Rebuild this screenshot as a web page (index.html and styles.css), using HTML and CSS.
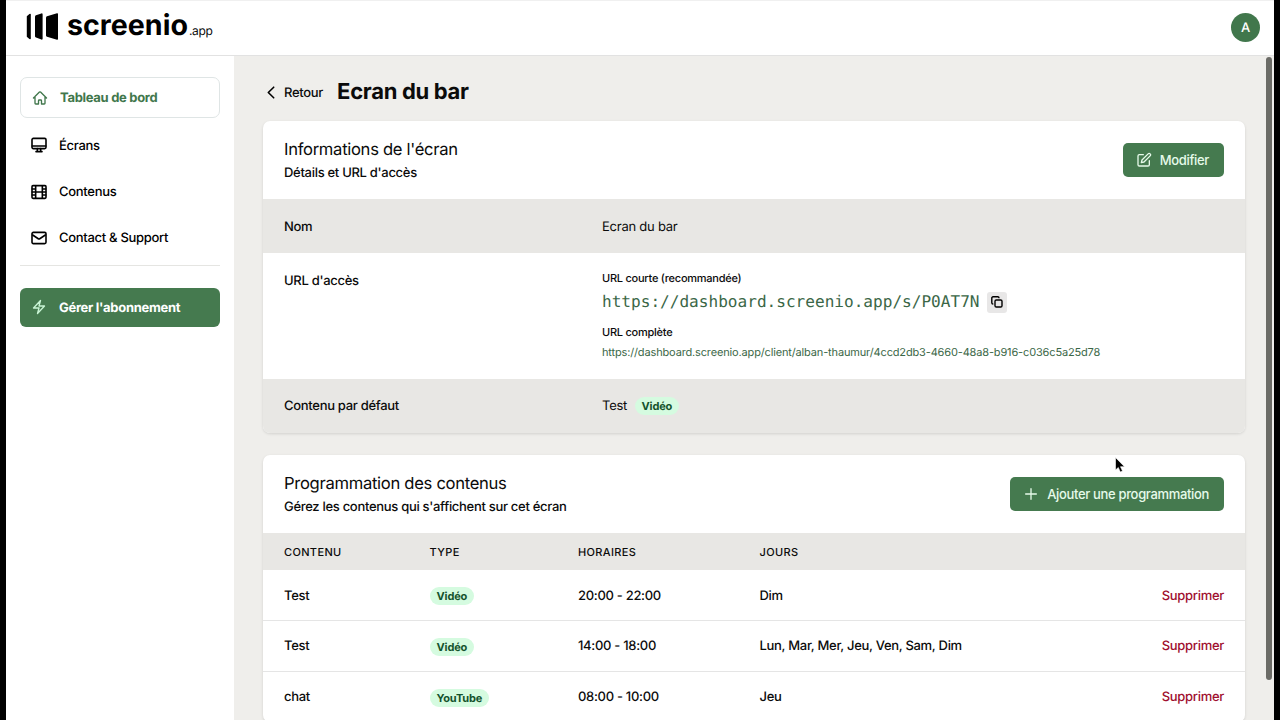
FILE: index.html
```html
<!DOCTYPE html>
<html lang="fr">

<head>
  <meta charset="UTF-8">
  <meta name="viewport" content="width=device-width, initial-scale=1.0">
  <title>Ecran du bar - screenio.app</title>
  <link rel="stylesheet" href="styles.css">
</head>

<body>
  <div class="app">
    <header class="topbar">
      <a class="logo">
        <svg class="logo-mark" width="32" height="28" viewBox="0 0 32 28">
          <path d="M0.8 3.2L3.4 1Q4.8 0.5 4.8 1.6V25.4Q4.8 26.5 3.4 26L0.8 23.8Z" />
          <path d="M9 3.6Q9 2.6 10 2.2L15.4 0.4Q16.6 0.2 16.6 1.2V25.8Q16.6 26.8 15.4 26.6L10 24.6Q9 24.2 9 23.2Z" />
          <path d="M20 4.6Q20 3.6 21 3.2L31 0.2Q32 0 32 1V26Q32 27 31 26.8L21 23.8Q20 23.4 20 22.4Z" />
        </svg>
        <span class="logo-name">screenio</span>
        <span class="logo-ext">.app</span>
      </a>
      <div class="avatar">A</div>
    </header>

    <div class="layout">
      <aside class="sidebar">
        <nav class="menu">
          <a class="menu-item active">
            <svg class="icon" viewBox="0 0 24 24"><path d="M2.2 12L11.2 3.05a1.13 1.13 0 0 1 1.6 0L21.8 12M4.5 9.75v10.1c0 .65.5 1.15 1.1 1.15h4.15v-4.9c0-.6.5-1.1 1.1-1.1h2.3c.6 0 1.1.5 1.1 1.1V21h4.15c.6 0 1.1-.5 1.1-1.15V9.75" /></svg>
            <span>Tableau de bord</span>
          </a>
          <a class="menu-item">
            <svg class="icon bold" viewBox="0 0 24 24"><rect x="1.5" y="2" width="21" height="15.5" rx="2" /><path d="M2 13.5h20M9.5 17.5v4M14.5 17.5v4M7.5 22h9" /></svg>
            <span>Écrans</span>
          </a>
          <a class="menu-item">
            <svg class="icon bold" viewBox="0 0 24 24"><rect x="1.5" y="2.5" width="21" height="19" rx="1.5" /><path d="M7 3v18M17 3v18M2 7.5h5M2 12h20M2 16.5h5M17 7.5h5M17 16.5h5" /></svg>
            <span>Contenus</span>
          </a>
          <a class="menu-item">
            <svg class="icon bold" viewBox="0 0 24 24"><rect x="1.5" y="3.5" width="21" height="17" rx="2" /><path d="M2.5 7.5l8.4 5.6a2 2 0 0 0 2.2 0l8.4-5.6" /></svg>
            <span>Contact &amp; Support</span>
          </a>
        </nav>
        <a class="subscription">
          <svg class="icon" viewBox="0 0 24 24"><path d="M3.75 13.5L14.25 2.25 12 10.5h8.25L9.75 21.75 12 13.5H3.75z" /></svg>
          <span>Gérer l'abonnement</span>
        </a>
      </aside>

      <main class="content">
        <div class="page-title">
          <a class="back">
            <svg width="8" height="13" viewBox="0 0 8 13"><path d="M6.7 1.2L1.3 6.5l5.4 5.3" /></svg>
            Retour
          </a>
          <h1>Ecran du bar</h1>
        </div>

        <section class="card">
          <div class="card-header">
            <div>
              <h2>Informations de l'écran</h2>
              <p>Détails et URL d'accès</p>
            </div>
            <button class="btn">
              <svg class="icon" viewBox="0 0 24 24"><path d="M11 4H5a2 2 0 0 0-2 2v13a2 2 0 0 0 2 2h13a2 2 0 0 0 2-2v-6M18.2 2.8a2.1 2.1 0 0 1 3 3L12 15l-4 1 1-4z" /></svg>
              Modifier
            </button>
          </div>
          <dl class="details">
            <div class="row grey">
              <dt>Nom</dt>
              <dd>Ecran du bar</dd>
            </div>
            <div class="row row-url">
              <dt>URL d'accès</dt>
              <dd>
                <p class="url-label">URL courte (recommandée)</p>
                <div class="short-url">
                  <a>https://dashboard.screenio.app/s/P0AT7N</a>
                  <button class="copy">
                    <svg width="12" height="12" viewBox="0 0 12 12"><rect x="4" y="4" width="7" height="7" rx="1.3" /><path d="M2.3 8H2A1.2 1.2 0 0 1 .8 6.800V2A1.2 1.2 0 0 1 2 .8h4.800A1.2 1.2 0 0 1 8 2v.3" /></svg>
                  </button>
                </div>
                <p class="url-label">URL complète</p>
                <a class="full-url">https://dashboard.screenio.app/client/alban-thaumur/4ccd2db3-4660-48a8-b916-c036c5a25d78</a>
              </dd>
            </div>
            <div class="row grey">
              <dt>Contenu par défaut</dt>
              <dd>Test <span class="badge">Vidéo</span></dd>
            </div>
          </dl>
        </section>

        <section class="card">
          <div class="card-header">
            <div>
              <h2>Programmation des contenus</h2>
              <p>Gérez les contenus qui s'affichent sur cet écran</p>
            </div>
            <button class="btn">
              <svg class="icon" viewBox="0 0 24 24"><path d="M12 4v16M4 12h16" /></svg>
              Ajouter une programmation
            </button>
          </div>
          <table class="schedule">
            <thead>
              <tr>
                <th class="col-content">Contenu</th>
                <th class="col-type">Type</th>
                <th class="col-hours">Horaires</th>
                <th>Jours</th>
                <th class="col-action"></th>
              </tr>
            </thead>
            <tbody>
              <tr>
                <td>Test</td>
                <td><span class="badge">Vidéo</span></td>
                <td>20:00 - 22:00</td>
                <td>Dim</td>
                <td class="delete">Supprimer</td>
              </tr>
              <tr>
                <td>Test</td>
                <td><span class="badge">Vidéo</span></td>
                <td>14:00 - 18:00</td>
                <td>Lun, Mar, Mer, Jeu, Ven, Sam, Dim</td>
                <td class="delete">Supprimer</td>
              </tr>
              <tr>
                <td>chat</td>
                <td><span class="badge">YouTube</span></td>
                <td>08:00 - 10:00</td>
                <td>Jeu</td>
                <td class="delete">Supprimer</td>
              </tr>
            </tbody>
          </table>
        </section>
      </main>
      <div class="scrollbar"></div>
    </div>
  </div>

  <svg class="cursor" width="12" height="16" viewBox="0 0 12 16"><path d="M1.5 .5v12.500l2.800-2.500 2 4.500 2.200-1-2-4.300h4z" /></svg>
</body>

</html>
```
FILE: styles.css
```css
* {
  margin: 0;
  padding: 0;
  box-sizing: border-box;
}

body {
  height: 720px;
  overflow: hidden;
  background: #000;
  color: #0b0b0b;
  font-family: Inter, "Liberation Sans", sans-serif;
  font-size: 13px;
  line-height: 18px;
  letter-spacing: -.3px;
  text-rendering: geometricPrecision;
}

.app {
  width: 1268px;
  height: 720px;
  margin-left: 6px;
  background: #fff;
  overflow: hidden;
}

.topbar {
  display: flex;
  justify-content: space-between;
  height: 56px;
  padding: 12px 14px 0 20px;
  border-top: 1px solid #f0f0f0;
  border-bottom: 1px solid #e2e2e2;
}

.logo {
  display: flex;
  height: 28px;
  letter-spacing: 0;
}

.logo-mark {
  fill: #000;
}

.logo-name {
  margin-left: 9px;
  font-size: 28.6px;
  font-weight: 700;
  line-height: 24px;
  color: #000;
}

.logo-ext {
  margin-left: 1px;
  font-size: 12px;
  line-height: 36px;
  letter-spacing: -.3px;
}

.avatar {
  width: 29px;
  height: 29px;
  border-radius: 50%;
  background: #41774c;
  color: #fff;
  font-weight: 500;
  line-height: 30px;
  text-align: center;
}

.layout {
  display: flex;
  height: 664px;
}

.sidebar {
  width: 228px;
  padding: 21px 14px;
}

.menu {
  display: flex;
  flex-direction: column;
  gap: 6px;
  padding-bottom: 6px;
  border-bottom: 1px solid #e5e5e2;
}

.menu-item,
.subscription {
  display: flex;
  align-items: center;
  gap: 12px;
  height: 40.5px;
  padding: 2px 11px 0;
  border-radius: 7px;
  color: #000;
  font-weight: 500;
}

.menu-item span,
.subscription span {
  padding-top: 1px;
}

.menu-item.active {
  height: 41px;
  padding-top: 0;
  border: 1px solid #dfe5e5;
  color: #41774c;
  font-weight: 700;
}

.menu-item:last-child {
  height: 41.5px;
  padding-top: 0;
}

.subscription {
  height: 39px;
  margin-top: 22px;
  padding-top: 0;
  border-radius: 6px;
  background: #457a4f;
  color: #fff;
  font-weight: 700;
}

.icon {
  width: 16px;
  height: 16px;
  fill: none;
  stroke: currentColor;
  stroke-width: 2;
  stroke-linecap: round;
  stroke-linejoin: round;
}

.icon.bold {
  stroke-width: 2.4;
}

.subscription .icon {
  stroke: #c9f5d5;
}

.content {
  flex: 1;
  padding: 20px 21px 0 29px;
  background: #efeeeb;
}

.page-title {
  display: flex;
  align-items: center;
  gap: 14px;
  height: 32px;
  margin-bottom: 13px;
  padding: 1px 0 0 4px;
}

.back {
  display: flex;
  align-items: center;
  gap: 9px;
  font-weight: 500;
}

.back svg {
  fill: none;
  stroke: #000;
  stroke-width: 1.6;
  stroke-linecap: round;
  stroke-linejoin: round;
}

h1 {
  font-size: 22px;
  font-weight: 700;
  line-height: 31px;
}

.card {
  margin-bottom: 22px;
  border-radius: 7px;
  background: #fff;
  box-shadow: 0 1px 3px rgba(0, 0, 0, .12);
  overflow: hidden;
}

.card-header {
  display: flex;
  align-items: center;
  justify-content: space-between;
  height: 78px;
  padding: 0 21px 1px;
}

h2 {
  margin-top: -1px;
  font-size: 16.6px;
  font-weight: 400;
  line-height: 27px;
}

.card-header p {
  font-weight: 500;
}

.btn {
  display: flex;
  align-items: center;
  gap: 8px;
  height: 34px;
  padding: 0 15px 0 13px;
  border: 0;
  border-radius: 5px;
  background: #457a4f;
  color: #e6faea;
  font: 500 13px Inter, "Liberation Sans", sans-serif;
  letter-spacing: -.34px;
}

.row {
  display: grid;
  grid-template-columns: 318px 1fr;
  height: 54px;
  padding: 19px 21px 17px;
}

.row.grey {
  background: #e8e7e4;
}

.row dt {
  font-weight: 500;
}

.row dd {
  letter-spacing: -.24px;
}

.row-url {
  height: 126px;
}

.row-url dd {
  margin-top: -2px;
}

.row:last-child {
  padding-top: 18px;
}

.url-label {
  font-size: 11px;
  font-weight: 500;
  line-height: 17px;
}

.short-url {
  display: flex;
  align-items: center;
  gap: 7px;
  height: 22px;
  margin: 4px 0 11px;
  color: #3b6747;
  font-family: "DejaVu Sans Mono", monospace;
  font-size: 16.08px;
  letter-spacing: 0;
}

.copy {
  display: flex;
  align-items: center;
  justify-content: center;
  width: 20px;
  height: 21px;
  border: 0;
  border-radius: 3px;
  background: #e8e7e7;
}

.copy svg {
  fill: none;
  stroke: #000;
  stroke-width: 1.4;
}

.full-url {
  display: block;
  margin-top: 3px;
  color: #3b6747;
  font-size: 11px;
  line-height: 17px;
  letter-spacing: -.15px;
}

.badge {
  display: inline-block;
  margin-left: 4px;
  padding: 0 7px;
  border-radius: 9px;
  background: #d5fbe0;
  color: #14532d;
  font-size: 11px;
  font-weight: 700;
  line-height: 18px;
  letter-spacing: -.15px;
}

.schedule {
  width: 100%;
  table-layout: fixed;
  border-collapse: collapse;
}

.schedule th {
  height: 37px;
  padding: 1px 0 0 21px;
  background: #e8e7e4;
  font-size: 11px;
  font-weight: 500;
  letter-spacing: .35px;
  text-align: left;
  text-transform: uppercase;
}

.schedule td {
  height: 51px;
  padding: 0 0 0 21px;
  font-weight: 500;
}

.schedule tbody tr:first-child td {
  height: 50px;
  padding-top: 2px;
}

.schedule tbody tr + tr td {
  padding-top: 1px;
}

.schedule tbody tr + tr {
  border-top: 1px solid #e5e5e5;
}

.schedule .badge {
  margin-left: 0;
  vertical-align: -1px;
}

.col-content {
  width: 145.5px;
}

.col-type {
  width: 148.5px;
}

.col-hours {
  width: 181.5px;
}

.col-action {
  width: 130px;
}

.schedule .delete {
  padding-right: 21px;
  color: #a0102f;
  text-align: right;
}

.scrollbar {
  width: 8px;
  background: #efeeeb;
}

.scrollbar::before {
  content: "";
  display: block;
  width: 6px;
  height: 623px;
  margin-top: 1px;
  border-radius: 3px;
  background: #6b6b66;
}

.cursor {
  position: absolute;
  left: 1114px;
  top: 457px;
  fill: #000;
  stroke: #fff;
  stroke-width: .6;
}
```
